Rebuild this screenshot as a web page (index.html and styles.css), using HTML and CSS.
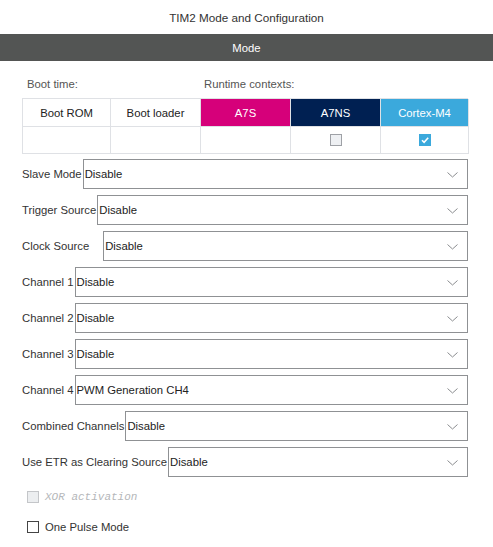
FILE: index.html
```html
<!DOCTYPE html>
<html>
<head>
<meta charset="utf-8">
<link rel="stylesheet" href="styles.css">
</head>
<body>
<div class="title">TIM2 Mode and Configuration</div>
<div class="bar">Mode</div>
<div class="content">
  <div class="ctx-labels">
    <span class="boot-label">Boot time:</span>
    <span class="rt-label">Runtime contexts:</span>
  </div>
  <div class="ctx-table">
    <div class="cell">Boot ROM</div>
    <div class="cell">Boot loader</div>
    <div class="cell a7s">A7S</div>
    <div class="cell a7ns">A7NS</div>
    <div class="cell m4">Cortex-M4</div>
    <div class="cell"></div>
    <div class="cell"></div>
    <div class="cell"></div>
    <div class="cell"><span class="cb"></span></div>
    <div class="cell"><span class="cb checked"><svg width="12" height="12" viewBox="0 0 12 12"><path d="M3 6.2 L5.1 8.3 L9.2 3.8" fill="none" stroke="#fff" stroke-width="1.6"/></svg></span></div>
  </div>
  <div class="rows">
    <div class="row"><span class="lbl">Slave Mode</span><div class="sel">Disable<svg class="chev" width="11" height="6" viewBox="0 0 11 6"><path d="M0.5 0.5 L5.5 5 L10.5 0.5" fill="none" stroke="#8a8c8f" stroke-width="1"/></svg></div></div>
    <div class="row"><span class="lbl">Trigger Source</span><div class="sel">Disable<svg class="chev" width="11" height="6" viewBox="0 0 11 6"><path d="M0.5 0.5 L5.5 5 L10.5 0.5" fill="none" stroke="#8a8c8f" stroke-width="1"/></svg></div></div>
    <div class="row"><span class="lbl wide">Clock Source</span><div class="sel">Disable<svg class="chev" width="11" height="6" viewBox="0 0 11 6"><path d="M0.5 0.5 L5.5 5 L10.5 0.5" fill="none" stroke="#8a8c8f" stroke-width="1"/></svg></div></div>
    <div class="row"><span class="lbl">Channel 1</span><div class="sel">Disable<svg class="chev" width="11" height="6" viewBox="0 0 11 6"><path d="M0.5 0.5 L5.5 5 L10.5 0.5" fill="none" stroke="#8a8c8f" stroke-width="1"/></svg></div></div>
    <div class="row"><span class="lbl">Channel 2</span><div class="sel">Disable<svg class="chev" width="11" height="6" viewBox="0 0 11 6"><path d="M0.5 0.5 L5.5 5 L10.5 0.5" fill="none" stroke="#8a8c8f" stroke-width="1"/></svg></div></div>
    <div class="row"><span class="lbl">Channel 3</span><div class="sel">Disable<svg class="chev" width="11" height="6" viewBox="0 0 11 6"><path d="M0.5 0.5 L5.5 5 L10.5 0.5" fill="none" stroke="#8a8c8f" stroke-width="1"/></svg></div></div>
    <div class="row"><span class="lbl">Channel 4</span><div class="sel">PWM Generation CH4<svg class="chev" width="11" height="6" viewBox="0 0 11 6"><path d="M0.5 0.5 L5.5 5 L10.5 0.5" fill="none" stroke="#8a8c8f" stroke-width="1"/></svg></div></div>
    <div class="row"><span class="lbl">Combined Channels</span><div class="sel">Disable<svg class="chev" width="11" height="6" viewBox="0 0 11 6"><path d="M0.5 0.5 L5.5 5 L10.5 0.5" fill="none" stroke="#8a8c8f" stroke-width="1"/></svg></div></div>
    <div class="row"><span class="lbl">Use ETR as Clearing Source</span><div class="sel">Disable<svg class="chev" width="11" height="6" viewBox="0 0 11 6"><path d="M0.5 0.5 L5.5 5 L10.5 0.5" fill="none" stroke="#8a8c8f" stroke-width="1"/></svg></div></div>
  </div>
  <div class="check-row disabled"><span class="box"></span><span class="xor">XOR activation</span></div>
  <div class="check-row"><span class="box"></span><span>One Pulse Mode</span></div>
</div>
</body>
</html>
```
FILE: styles.css
```css
* { box-sizing: border-box; }
body {
  margin: 0;
  background: #fff;
  font-family: "Liberation Sans", Arial, sans-serif;
  font-size: 11.3px;
  color: #333;
}
.title {
  height: 34px;
  display: flex;
  align-items: center;
  justify-content: center;
  color: #333;
  font-size: 11.7px;
}
.bar {
  height: 27px;
  background: #535554;
  color: #fff;
  display: flex;
  align-items: center;
  justify-content: center;
}
.content {
  padding: 0 25px 0 22px;
}
.ctx-labels {
  display: flex;
  height: 37px;
  padding-top: 17px;
  color: #555;
}
.boot-label { padding-left: 5px; width: 182px; }
.ctx-table {
  display: grid;
  grid-template-columns: 88px 90px 90px 90px 88px;
  grid-template-rows: 28px 27px;
  border-top: 1px solid #dfe1e5;
  border-left: 1px solid #dfe1e5;
}
.cell {
  border-right: 1px solid #dfe1e5;
  border-bottom: 1px solid #dfe1e5;
  display: flex;
  align-items: center;
  justify-content: center;
  color: #222;
}
.a7s { background: #d6007a; color: #fff; }
.a7ns { background: #002052; color: #fff; }
.m4 { background: #3ba9dc; color: #fff; }
.cb {
  width: 12px;
  height: 12px;
  border: 1px solid #9ea1a6;
  background: #eef0f3;
  display: block;
}
.cb.checked {
  background: #3ba9dc;
  border-color: #3ba9dc;
  position: relative;
}
.cb.checked svg { position: absolute; left: -1px; top: -1px; }
.rows {
  display: flex;
  flex-direction: column;
  gap: 6px;
  margin-top: 5px;
}
.row {
  display: flex;
  align-items: center;
  height: 30px;
}
.lbl { white-space: nowrap; padding-right: 1px; }
.lbl.wide { padding-right: 14px; }
.sel {
  flex: 1;
  height: 30px;
  border: 1px solid #8f9194;
  display: flex;
  align-items: center;
  padding-left: 1px;
  position: relative;
  color: #222;
}
.chev {
  position: absolute;
  right: 9px;
  top: 12px;
}
.check-row {
  display: flex;
  align-items: center;
  gap: 6px;
  padding-left: 5px;
  height: 18px;
  margin-top: 11px;
}
.check-row + .check-row { margin-top: 12px; }
.box {
  width: 12px;
  height: 12px;
  border: 1px solid #444;
  background: #fff;
}
.check-row.disabled .box {
  border-color: #c4c6c9;
  background: #eceef0;
}
.xor {
  font-family: "Liberation Mono", monospace;
  font-style: italic;
  font-size: 11px;
  color: #b5b7ba;
}
```
